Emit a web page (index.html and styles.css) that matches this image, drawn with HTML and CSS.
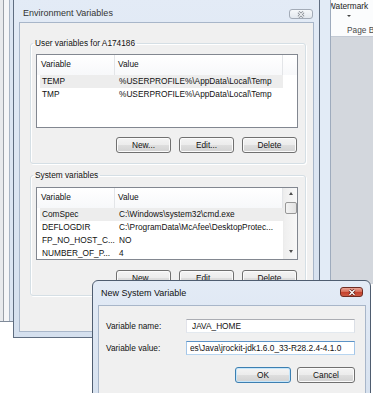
FILE: index.html
```html
<!DOCTYPE html>
<html>
<head>
<meta charset="UTF-8">
<title>Environment Variables</title>
<link rel="stylesheet" href="styles.css">
</head>
<body>
<div class="desk">
	<div class="backwin"></div>

	<div class="word">
		<div class="word-edge"></div>
		<div class="word-main">
			<div class="ribbon">
				<span class="wm">Watermark</span>
				<span class="drop"></span>
				<span class="grp">Page Background</span>
			</div>
			<div class="doc"></div>
		</div>
	</div>

	<div class="win env">
		<div class="titlebar">
			<span class="title">Environment Variables</span>
			<span class="close close-off">
				<svg width="10" height="7" viewBox="0 0 10 7"><path d="M2.5 1 L7.5 6 M7.5 1 L2.5 6" stroke="#80858d" stroke-width="2.6" fill="none"/><path d="M2.5 1 L7.5 6 M7.5 1 L2.5 6" stroke="#f1f3f6" stroke-width="1.1" fill="none"/></svg>
			</span>
		</div>
		<div class="client">
			<fieldset class="group user">
				<legend>User variables for A174186</legend>
				<div class="list">
					<div class="head"><span>Variable</span><span>Value</span><span class="last"></span></div>
					<div class="row sel"><span>TEMP</span><span>%USERPROFILE%\AppData\Local\Temp</span></div>
					<div class="row"><span>TMP</span><span>%USERPROFILE%\AppData\Local\Temp</span></div>
				</div>
				<div class="btns">
					<button>New...</button><button>Edit...</button><button>Delete</button>
				</div>
			</fieldset>

			<fieldset class="group sys">
				<legend>System variables</legend>
				<div class="list scroll">
					<div class="rows">
						<div class="head"><span>Variable</span><span>Value</span></div>
						<div class="row sel"><span>ComSpec</span><span>C:\Windows\system32\cmd.exe</span></div>
						<div class="row"><span>DEFLOGDIR</span><span>C:\ProgramData\McAfee\DesktopProtec...</span></div>
						<div class="row"><span>FP_NO_HOST_C...</span><span>NO</span></div>
						<div class="row"><span>NUMBER_OF_P...</span><span>4</span></div>
					</div>
					<div class="vscroll">
						<span class="sb-btn"><i class="up"></i></span>
						<span class="thumb"></span>
						<span class="sb-fill"></span>
						<span class="sb-btn"><i class="down"></i></span>
					</div>
				</div>
				<div class="btns">
					<button>New...</button><button>Edit...</button><button>Delete</button>
				</div>
			</fieldset>
		</div>
	</div>

	<div class="win newvar">
		<div class="titlebar">
			<span class="title">New System Variable</span>
			<span class="close close-red">
				<svg width="10" height="7" viewBox="0 0 10 7"><path d="M2.5 1 L7.5 6 M7.5 1 L2.5 6" stroke="#5b1d15" stroke-width="2.8" fill="none"/><path d="M2.5 1 L7.5 6 M7.5 1 L2.5 6" stroke="#fff" stroke-width="1.4" fill="none"/></svg>
			</span>
		</div>
		<div class="client form">
			<div class="field"><label>Variable name:</label><input type="text" value="JAVA_HOME" readonly></div>
			<div class="field"><label>Variable value:</label><input type="text" class="active" value="es\Java\jrockit-jdk1.6.0_33-R28.2.4-4.1.0" readonly></div>
			<div class="dbtns">
				<button class="ok">OK</button><button class="cancel">Cancel</button>
			</div>
		</div>
	</div>
</div>
</body>
</html>
```

FILE: styles.css
```css
*{
  box-sizing:border-box;
}

body{
  margin:0;
  background:#fff;
  font-family:"Liberation Sans",Arial,sans-serif;
  font-size:8.3px;
  color:#111;
}

.desk{
  position:relative;
  width:373px;
  height:393px;
  overflow:hidden;
}

/* window peeking out on the left */
.backwin{
  position:absolute;
  left:0;
  top:0;
  width:13px;
  height:322px;
  border-bottom:1px solid #7f8a99;
  background:linear-gradient(to right,#e8eaed 0 3px,#9aa0a8 3px 4px,#f5f6f8 4px 9px,#a9b5c5 9px 10px,#dbe5f2 10px);
}

/* word window behind on the right */
.word{
  position:absolute;
  left:320px;
  top:0;
  width:53px;
  height:284px;
  display:flex;
}
.word-edge{
  width:11px;
  background:#e2ebf6;
  border-right:1px solid #9eabbd;
}
.word-main{
  flex:1;
  display:flex;
  flex-direction:column;
  overflow:hidden;
}
.ribbon{
  height:37px;
  background:#fbfcfd;
  border-bottom:1px solid #c3cad4;
}
.ribbon .wm{
  display:block;
  margin:1px 0 0 -3px;
  line-height:10px;
  white-space:nowrap;
  color:#222;
}
.ribbon .drop{
  display:block;
  width:0;
  margin:4px 0 0 16px;
  border-left:2px solid transparent;
  border-right:2px solid transparent;
  border-top:2px solid #444;
}
.ribbon .grp{
  display:block;
  margin:8px 0 0 16px;
  line-height:10px;
  white-space:nowrap;
  color:#4a4a4a;
}
.doc{
  flex:1;
  background:#d3d7dd;
}

/* dialog frames */
.win{
  position:absolute;
  display:flex;
  flex-direction:column;
  border:1px solid #5f6d80;
  background:linear-gradient(#e3ebf6,#d5e0ee);
}
.titlebar{
  display:flex;
  align-items:flex-start;
  flex:none;
}
.title{
  font-size:9px;
  line-height:11px;
  white-space:nowrap;
}
.close{
  margin-left:auto;
  display:flex;
  align-items:center;
  justify-content:center;
  border-radius:3px;
}
.close-off{
  width:24px;
  height:10px;
  border:1px solid #a3abb7;
  background:linear-gradient(#f6f8fa,#e3e8ee);
}
.close-red{
  width:23px;
  height:10px;
  border:1px solid #6f2c22;
  background:linear-gradient(#eaa597 0%,#d66d58 48%,#c5402c 52%,#cc5a44 100%);
}
.client{
  flex:1;
  display:flex;
  flex-direction:column;
  background:#f0f0f0;
  border:1px solid #a8b6c9;
}

.env{
  left:13px;
  top:-4px;
  width:307px;
  height:342px;
}
.env .titlebar{height:25px;padding:0 6px 0 9px}
.env .title{margin-top:11px;color:#333}
.env .close{margin-top:12px}
.env .client{margin:0 5px 5px 5px;padding:0 7px 0 10px}

/* group boxes */
.group{
  margin:0;
  min-width:0;
  padding:0 7px 10px 5px;
  border:1px solid #d5dfe5;
  border-radius:3px;
  box-shadow:inset 1px 1px 0 #fff,1px 1px 0 #fff;
}
.group legend{
  padding:0 2px;
  margin-left:-3px;
  line-height:10px;
}
.user{margin-top:15px}
.sys{margin-top:6px;padding-bottom:9px}
.user .list{margin-top:6px;height:74px}
.sys .list{margin-top:7px;height:73px}

.list{
  background:#fff;
  border:1px solid #828790;
  overflow:hidden;
}
.head{
  display:grid;
  grid-template-columns:78px 168px 1fr;
  height:20px;
  background:linear-gradient(#fff,#f7f8fa);
}
.head span{
  padding-left:4px;
  line-height:19px;
  border-right:1px solid #e3e5e8;
}
.head span+span{padding-left:3px}
.head .last{border-right:0}
.row{
  display:grid;
  grid-template-columns:76px 1fr;
  width:243px;
  height:13px;
  margin-left:3px;
  line-height:13px;
}
.row span{
  padding-left:2px;
  white-space:nowrap;
  overflow:hidden;
}
.row span+span{padding-left:3px}
.row.sel{background:#ededed}

.scroll{display:flex}
.rows{width:246px;flex:none}
.vscroll{
  flex:1;
  display:flex;
  flex-direction:column;
  align-items:center;
  background:linear-gradient(to right,#eeeeee,#f8f8f8);
  border-left:1px solid #ececec;
}
.sb-btn{
  height:14px;
  width:100%;
  display:flex;
  align-items:center;
  justify-content:center;
}
.sb-btn i{
  width:0;
  border-left:2.5px solid transparent;
  border-right:2.5px solid transparent;
}
.sb-btn .up{border-bottom:3px solid #4d4d4d;margin-top:-4px}
.sb-btn .down{border-top:3px solid #4d4d4d;margin-top:-1px}
.thumb{
  width:12px;
  height:12px;
  border:1px solid #979797;
  border-radius:2px;
  background:linear-gradient(to right,#f3f3f3,#e2e2e2);
}
.sb-fill{flex:1}

/* buttons */
.btns{
  display:flex;
  justify-content:flex-end;
  gap:8px;
  padding-right:1px;
  margin-top:9px;
}
.sys .btns{margin-top:10px}
button{
  width:55px;
  height:16px;
  padding:0;
  border:1px solid #707070;
  border-radius:3px;
  background:linear-gradient(#f4f4f4 0%,#ececec 48%,#dedede 52%,#d2d2d2 100%);
  box-shadow:inset 0 0 0 1px #fbfbfb;
  font:inherit;
  color:#111;
  line-height:14px;
}

/* new system variable dialog */
.newvar{
  left:92px;
  top:280px;
  width:279px;
  height:140px;
  border-color:#4f5d70;
  border-radius:6px 6px 0 0;
}
.newvar .titlebar{height:24px;padding:0 7px 0 8px}
.newvar .title{margin-top:7px;color:#111}
.newvar .close{margin-top:6px}
.newvar .client{margin:0 4px 0 5px;padding:13px 10px 0 7px}

.field{
  display:flex;
  align-items:center;
  height:14px;
}
.field+.field{margin-top:8px}
.field label{
  width:80px;
  flex:none;
  white-space:nowrap;
}
.field input{
  width:169px;
  height:14px;
  padding:0 3px 0 5px;
  border:1px solid;
  border-color:#abadb3 #dbdfe6 #e3e9ef #e2e3ea;
  background:#fff;
  font:inherit;
  color:#111;
  outline:none;
}
.field input.active{
  padding-left:3px;
  border-color:#5c93c7 #a4c6e8 #b7d5f0 #a4c6e8;
}

.dbtns{
  display:flex;
  justify-content:flex-end;
  gap:6px;
  margin-top:12px;
}
.dbtns .ok{
  width:56px;
  border-color:#3c7fb1;
  box-shadow:inset 0 0 0 1px #c5e6fb;
}
.dbtns .cancel{width:58px}
```
